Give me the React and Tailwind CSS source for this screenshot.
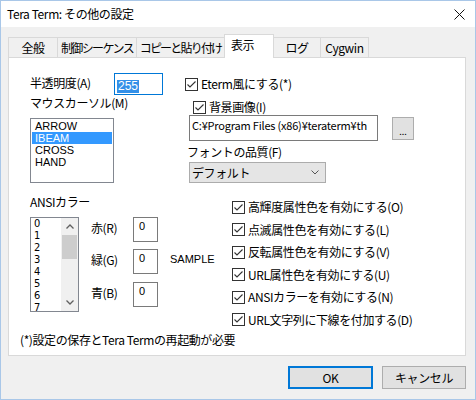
import React from 'react';

const tabs = [
  { label: '全般', cls: 'w-[49px] h-[20px] border-t border-l bg-[#f0f0f0]' },
  { label: '制御シーケンス', cls: 'w-[79px] h-[20px] border-t border-l bg-[#f0f0f0] tracking-[-1.6px]' },
  { label: 'コピーと貼り付け', cls: 'w-[88px] h-[20px] border-t border-l bg-[#f0f0f0] tracking-[-1.8px]' },
  { label: '表示', cls: 'w-[50px] h-[24px] border-t border-l border-r bg-white relative z-10 mb-[-1px] pb-[4px] justify-start pl-[6px]' },
  { label: 'ログ', cls: 'w-[46px] h-[20px] border-t bg-[#f0f0f0]' },
  { label: 'Cygwin', cls: 'w-[49px] h-[20px] border-t border-l border-r bg-[#f0f0f0]' },
];

const cursors = ['ARROW', 'IBEAM', 'CROSS', 'HAND'];

const attrs = [
  '高輝度属性色を有効にする(O)',
  '点滅属性色を有効にする(L)',
  '反転属性色を有効にする(V)',
  'URL属性色を有効にする(U)',
  'ANSIカラーを有効にする(N)',
  'URL文字列に下線を付加する(D)',
];

function Check({ label, className = '' }) {
  return (
    <div className={`flex items-center h-[16px] ${className}`}>
      <span className="w-[13px] h-[13px] border border-[#333333] bg-white flex items-center justify-center shrink-0">
        <svg width="11" height="11" viewBox="0 0 11 11">
          <path d="M1.5 5.5 L4 8 L9.5 2.5" fill="none" stroke="#333333" strokeWidth="1.1" />
        </svg>
      </span>
      <span className="ml-[3px] leading-[16px] whitespace-nowrap">{label}</span>
    </div>
  );
}

function ColorRow({ label, className = '', children }) {
  return (
    <div className={`flex items-center ${className}`}>
      <span className="w-[42px] leading-[16px] pb-[3px]">{label}</span>
      <div className="w-[25px] h-[25px] border border-[#7a7a7a] bg-white pl-[5px] pt-[2px] font-['Liberation_Sans',sans-serif] text-[11px] leading-[12px]">
        0
      </div>
      {children}
    </div>
  );
}

export default function App() {
  return (
    <div className="w-[476px] h-[400px] bg-[#f0f0f0] border border-[#a9c7e8] flex flex-col text-[12px] tracking-[-0.4px] text-black font-['Noto_Sans_CJK_JP',sans-serif] overflow-hidden">
      {/* title bar */}
      <div className="h-[26px] bg-white flex items-center justify-between pl-[6px] pr-[10px] shrink-0">
        <span className="leading-[16px]">Tera Term: その他の設定</span>
        <svg width="11" height="11" viewBox="0 0 11 11">
          <path d="M0.5 0.5 L10.5 10.5 M10.5 0.5 L0.5 10.5" stroke="#111111" strokeWidth="1" />
        </svg>
      </div>

      {/* tabs */}
      <div className="flex items-end h-[30px] pl-[7px] shrink-0">
        {tabs.map((t) => (
          <div
            key={t.label}
            className={`flex items-center justify-center border-[#d9d9d9] leading-[16px] whitespace-nowrap ${t.cls}`}
          >
            {t.label}
          </div>
        ))}
      </div>

      {/* tab page */}
      <div className="ml-[7px] w-[458px] h-[299px] border border-[#d9d9d9] bg-white flex flex-col shrink-0">
        <div className="flex items-start pl-[21px]">
          {/* left column */}
          <div className="w-[155px] flex flex-col">
            <div className="mt-[15px] flex items-center h-[22px]">
              <span className="w-[84px] leading-[16px] pb-[3px]">半透明度(A)</span>
              <div className="w-[49px] h-[22px] border border-[#0078d7] bg-white pl-[2px] pt-[2px]">
                <span className="bg-[#3390e8] text-white px-[1px] font-['Liberation_Sans',sans-serif] text-[12px] tracking-normal leading-[13px] inline-block">
                  255
                </span>
              </div>
            </div>
            <span className="leading-[16px]">マウスカーソル(M)</span>
            <div className="mt-[7px] w-[84px] h-[65px] border border-[#828790] bg-white p-[1px] font-['Liberation_Sans',sans-serif] text-[11px] tracking-normal">
              {cursors.map((c) => (
                <div
                  key={c}
                  className={`h-[12px] leading-[12px] pl-[3px] ${c === 'IBEAM' ? 'bg-[#3399ff] text-white' : ''}`}
                >
                  {c}
                </div>
              ))}
            </div>
          </div>

          {/* right column */}
          <div className="flex flex-col">
            <Check label="Eterm風にする(*)" className="mt-[18px]" />
            <Check label="背景画像(I)" className="mt-[7px] ml-[8px]" />
            <div className="flex items-start ml-[4px]">
              <div className="w-[189px] h-[26px] border border-[#7a7a7a] bg-white pl-[2px] pt-[1px] leading-[16px] overflow-hidden whitespace-nowrap text-[11px] tracking-[-0.2px]">
                C:¥Program Files (x86)¥teraterm¥th
              </div>
              <button className="ml-[14px] mt-[2px] w-[22px] h-[23px] bg-[#e1e1e1] border border-[#adadad] text-[9px] leading-[9px] pt-[5px] tracking-normal">
                ...
              </button>
            </div>
            <span className="mt-[3px] ml-[2px] leading-[16px]">フォントの品質(F)</span>
            <div className="mt-[2px] ml-[4px] w-[137px] h-[21px] bg-[#e5e5e5] border border-[#acacac] flex items-center justify-between pl-[2px] pr-[6px]">
              <span className="leading-[16px]">デフォルト</span>
              <svg width="8" height="5" viewBox="0 0 8 5">
                <path d="M0.5 0.5 L4 4 L7.5 0.5" fill="none" stroke="#555555" strokeWidth="1" />
              </svg>
            </div>
          </div>
        </div>

        {/* colours */}
        <div className="flex items-start pl-[21px] mt-[11px]">
          <div className="w-[202px] flex flex-col">
            <span className="leading-[16px]">ANSIカラー</span>
            <div className="mt-[7px] flex items-start">
              <div className="w-[49px] h-[95px] border border-[#828790] bg-white flex overflow-hidden">
                <div className="flex-1 pl-[3px] font-['DejaVu_Sans_Condensed','Liberation_Sans_Narrow','Liberation_Sans',sans-serif] text-[11px] tracking-normal">
                  {[0, 1, 2, 3, 4, 5, 6, 7].map((n) => (
                    <div key={n} className="h-[12px] leading-[12px]">
                      {n}
                    </div>
                  ))}
                </div>
                <div className="w-[17px] bg-[#f0f0f0] flex flex-col shrink-0">
                  <div className="h-[17px] flex items-center justify-center">
                    <svg width="8" height="5" viewBox="0 0 8 5">
                      <path d="M0.5 4.5 L4 1 L7.5 4.5" fill="none" stroke="#606060" strokeWidth="1.3" />
                    </svg>
                  </div>
                  <div className="h-[24px] bg-[#cdcdcd] mx-[1px]" />
                  <div className="flex-1" />
                  <div className="h-[17px] flex items-center justify-center">
                    <svg width="8" height="5" viewBox="0 0 8 5">
                      <path d="M0.5 0.5 L4 4 L7.5 0.5" fill="none" stroke="#606060" strokeWidth="1.3" />
                    </svg>
                  </div>
                </div>
              </div>
              <div className="ml-[12px] flex flex-col">
                <ColorRow label="赤(R)" />
                <ColorRow label="緑(G)" className="mt-[7px]">
                  <span className="ml-[12px] pb-[5px] font-['Liberation_Sans',sans-serif] text-[11px] tracking-normal leading-[14px]">
                    SAMPLE
                  </span>
                </ColorRow>
                <ColorRow label="青(B)" className="mt-[8px]" />
              </div>
            </div>
          </div>
          <div className="mt-[2px] flex flex-col">
            {attrs.map((a) => (
              <div key={a} className="h-[22.5px] flex items-center">
                <Check label={a} />
              </div>
            ))}
          </div>
        </div>

        <div className="mt-auto mb-[7px] pl-[11px] leading-[16px]">(*)設定の保存とTera Termの再起動が必要</div>
      </div>

      {/* buttons */}
      <div className="mt-[10px] flex justify-end pr-[9px] gap-[9px]">
        <button className="w-[85px] h-[23px] bg-[#e1e1e1] border-2 border-[#0078d7] leading-[16px]">OK</button>
        <button className="w-[84px] h-[23px] bg-[#e1e1e1] border border-[#adadad] leading-[16px]">キャンセル</button>
      </div>
    </div>
  );
}
